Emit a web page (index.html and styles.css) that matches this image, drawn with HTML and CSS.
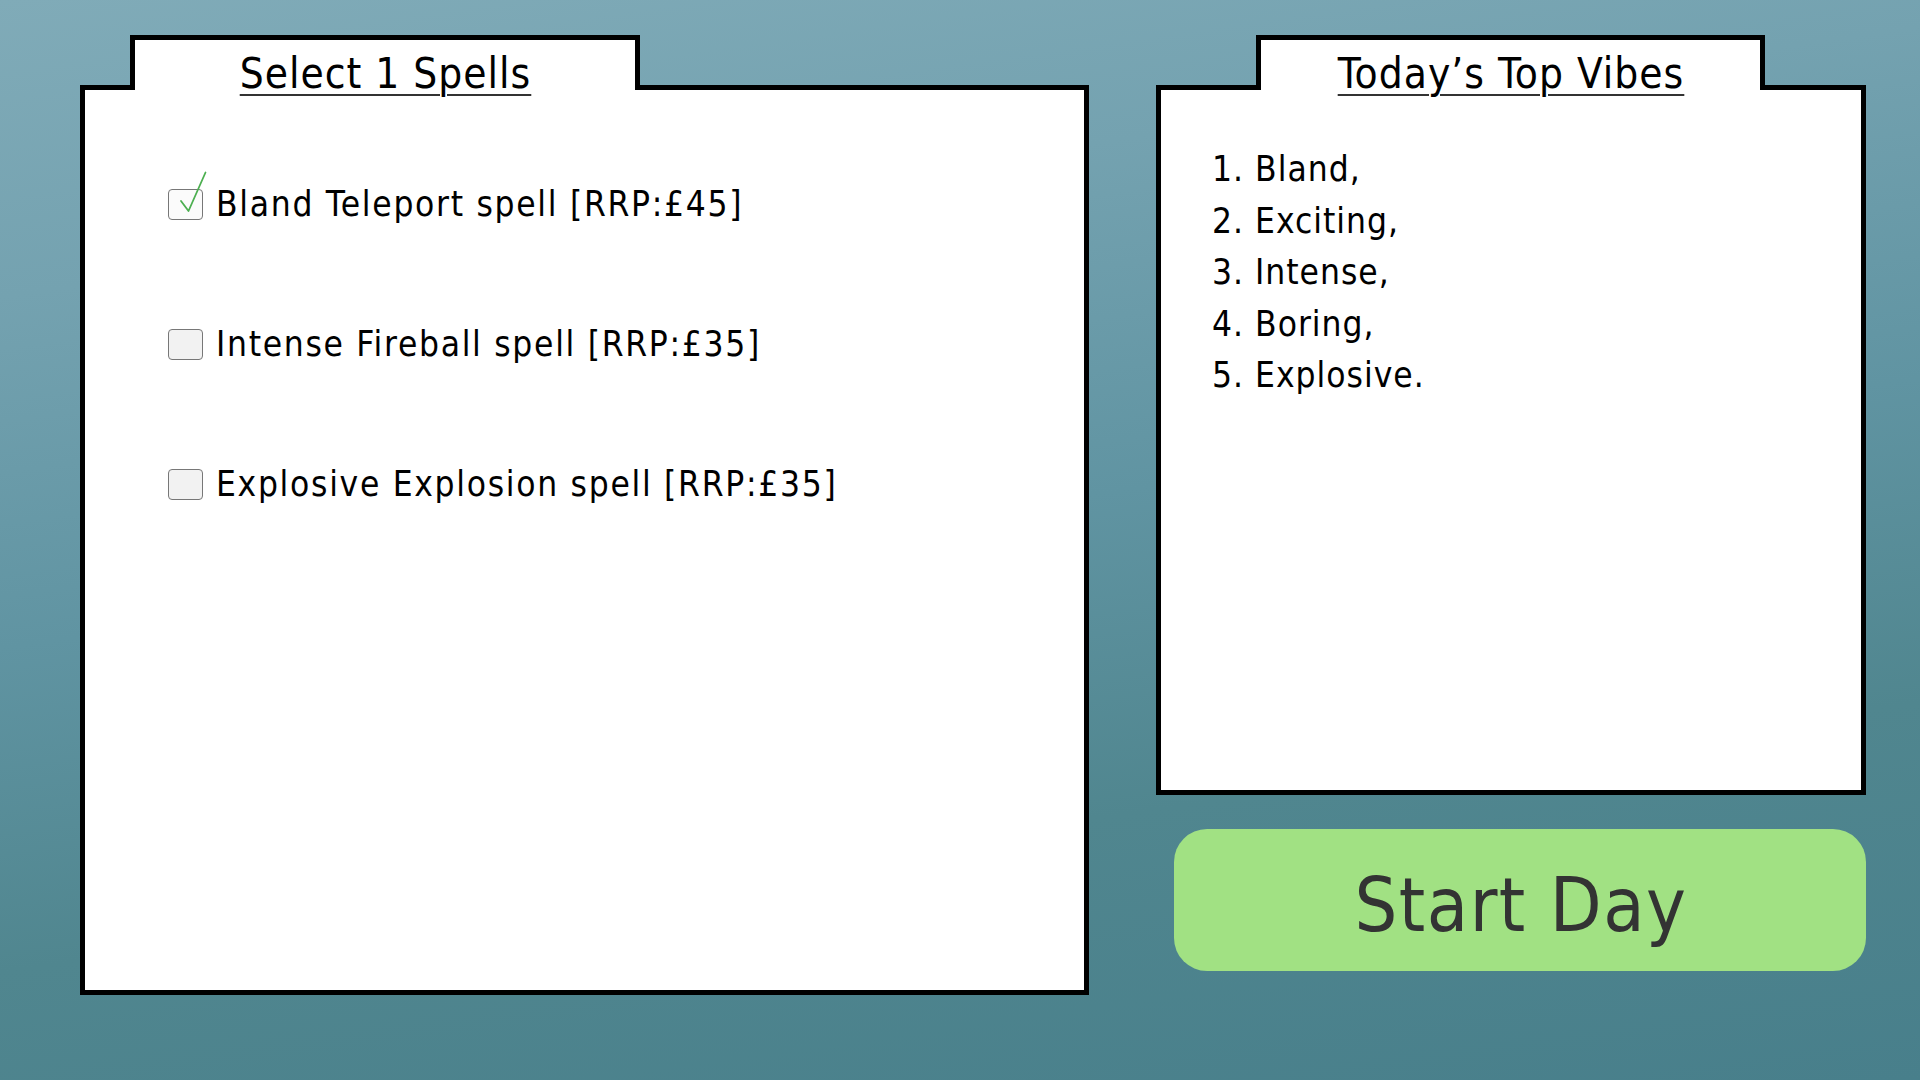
FILE: index.html
```html
<!DOCTYPE html>
<html lang="en">
<head>
<meta charset="utf-8">
<title>Select Spells</title>
<link rel="stylesheet" href="styles.css">
</head>
<body>
<main class="screen">
  <section class="panel panel-spells">
    <div class="tab tab-spells"><h1 class="tab-title">Select 1 Spells</h1></div>
    <div class="sheet sheet-spells">
      <ul class="spell-list">
        <li class="spell">
          <span class="box box-checked">
            <svg class="tick" width="44" height="48" viewBox="0 0 44 48"><path d="M13 30 L20.5 40 L37.5 1.5" fill="none" stroke="#4caf50" stroke-width="1.8" stroke-linecap="round" stroke-linejoin="round"/></svg>
          </span>
          <span class="spell-name">Bland Teleport spell [RRP:£45]</span>
        </li>
        <li class="spell">
          <span class="box"></span>
          <span class="spell-name">Intense Fireball spell [RRP:£35]</span>
        </li>
        <li class="spell">
          <span class="box"></span>
          <span class="spell-name">Explosive Explosion spell [RRP:£35]</span>
        </li>
      </ul>
    </div>
  </section>
  <section class="side">
    <div class="panel panel-vibes">
      <div class="tab tab-vibes"><h2 class="tab-title">Today’s Top Vibes</h2></div>
      <div class="sheet sheet-vibes">
        <ol class="vibes">
          <li>1. Bland,</li>
          <li>2. Exciting,</li>
          <li>3. Intense,</li>
          <li>4. Boring,</li>
          <li>5. Explosive.</li>
        </ol>
      </div>
    </div>
    <button class="start" type="button">Start Day</button>
  </section>
</main>
</body>
</html>
```

FILE: styles.css
```css
html, body {
  margin: 0;
  padding: 0;
}

body {
  width: 1920px;
  height: 1080px;
  overflow: hidden;
  font-family: "DejaVu Sans Condensed", "Liberation Sans", sans-serif;
  color: #000;
  background: linear-gradient(172deg, #80abb8 0%, #74a2b0 22%, #6094a2 48%, #50868f 72%, #487f8b 100%);
}

.screen {
  box-sizing: border-box;
  height: 1080px;
  padding: 35px 0 0 80px;
  display: grid;
  grid-template-columns: 1009px 710px;
  column-gap: 67px;
  align-items: start;
}

.panel {
  display: flex;
  flex-direction: column;
}

.tab {
  position: relative;
  z-index: 1;
  box-sizing: border-box;
  height: 55px;
  margin-bottom: -5px;
  border: 5px solid #000;
  border-bottom: none;
  background: #fff;
  padding-top: 13px;
  text-align: center;
}

.tab-spells {
  width: 510px;
  margin-left: 50px;
}

.tab-vibes {
  width: 509px;
  margin-left: 100px;
}

.tab-title {
  margin: 0;
  font-size: 42px;
  line-height: 42px;
  font-weight: normal;
  letter-spacing: 1px;
  padding-left: 1px;
  text-decoration: underline;
  text-decoration-color: #333;
  text-decoration-thickness: 2px;
  text-underline-offset: 6px;
}

.sheet {
  box-sizing: border-box;
  border: 5px solid #000;
  background: #fff;
}

.sheet-spells {
  height: 910px;
  padding: 94px 0 0 83px;
}

.spell-list {
  list-style: none;
  margin: 0;
  padding: 0;
  display: flex;
  flex-direction: column;
  gap: 100px;
}

.spell {
  display: flex;
  align-items: center;
  gap: 13px;
  font-size: 35px;
  line-height: 40px;
  letter-spacing: 1.7px;
}

.box {
  position: relative;
  flex: none;
  box-sizing: border-box;
  width: 35px;
  height: 31px;
  border: 1.5px solid #777;
  border-radius: 4px;
  background: #f2f2f2;
}

.box-checked {
  background: #fbfbfb;
}

.tick {
  position: absolute;
  left: -1.5px;
  top: -18.5px;
}

.side {
  display: flex;
  flex-direction: column;
}

.sheet-vibes {
  height: 710px;
  padding: 54px 0 0 51px;
}

.vibes {
  list-style: none;
  margin: 0;
  padding: 0;
  font-size: 35px;
  line-height: 51.5px;
  letter-spacing: 1px;
}

.start {
  margin: 34px 0 0 18px;
  width: 692px;
  height: 142px;
  border: none;
  border-radius: 33px;
  background: #a1e183;
  color: #333;
  font-family: "DejaVu Sans Condensed", "Liberation Sans", sans-serif;
  font-size: 75px;
  line-height: 75px;
  letter-spacing: 1.5px;
  padding: 10px 0 0 2px;
  cursor: pointer;
}
```
